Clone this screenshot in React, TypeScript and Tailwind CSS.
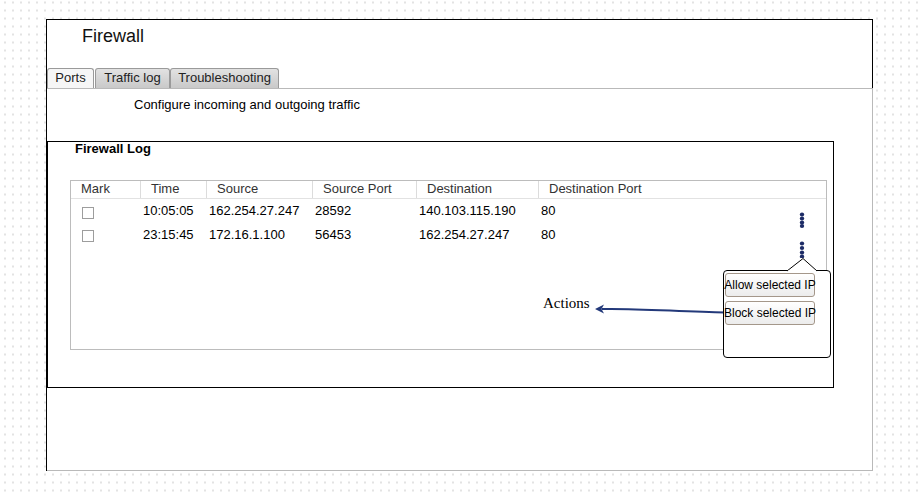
import React from "react";

const cols = [
  { label: "Mark", w: "w-[69px]" },
  { label: "Time", w: "w-[66px]" },
  { label: "Source", w: "w-[106px]" },
  { label: "Source Port", w: "w-[104px]" },
  { label: "Destination", w: "w-[122px]" },
];

const rows = [
  ["10:05:05", "162.254.27.247", "28592", "140.103.115.190", "80"],
  ["23:15:45", "172.16.1.100", "56453", "162.254.27.247", "80"],
];

function Kebab({ ys }: { ys: number[] }) {
  return (
    <svg width="8" height="18" viewBox="0 0 8 18" className="block">
      {ys.map((y, i) => (
        <ellipse key={i} cx="4" cy={y} rx="2.2" ry="1.9" fill="#1c2b66" />
      ))}
    </svg>
  );
}

export default function App() {
  return (
    <div
      className="w-[918px] h-[494px] bg-white bg-[radial-gradient(circle,#e3e3e3_0.8px,transparent_1.1px)] bg-[length:8px_8px] bg-[position:1px_-1.5px] pt-[19px] pl-[46px] overflow-hidden"
      style={{ fontFamily: '"Liberation Sans", Arial, sans-serif' }}
    >
      <div className="w-[827px] h-[452px] flex flex-col border-l border-t border-black bg-white">
        {/* Header */}
        <div className="h-[68px] border-r border-black flex flex-col">
          <div className="pl-[35px] pt-[5px] text-[18px] leading-[22px] text-[#111]">Firewall</div>
          <div className="mt-auto flex items-end h-[20px]">
            <div className="w-[47px] h-[20px] flex items-center justify-center pb-[2px] border border-b-0 border-[#9a9a9a] rounded-t-[3px] bg-[#f6f6f6] text-[13px] text-[#222]">
              Ports
            </div>
            <div className="ml-[1px] w-[75px] h-[20px] flex items-center justify-center pb-[2px] border border-b-0 border-[#9a9a9a] rounded-t-[3px] bg-gradient-to-b from-[#e2e2e2] to-[#c9c9c9] text-[13px] text-[#222]">
              Traffic log
            </div>
            <div className="w-[109px] h-[20px] flex items-center justify-center pb-[2px] border border-b-0 border-[#9a9a9a] rounded-t-[3px] bg-gradient-to-b from-[#e2e2e2] to-[#c9c9c9] text-[13px] text-[#222]">
              Troubleshooting
            </div>
          </div>
        </div>

        {/* Content */}
        <div className="flex-1 border-t border-r border-b border-[#b9b9b9] flex flex-col">
          <div className="pl-[87px] pt-[8px] text-[13px] leading-[16px] text-black">
            Configure incoming and outgoing traffic
          </div>

          <div className="mt-[28px] w-[787px] h-[247px] border border-black flex flex-col">
            <div className="pl-[27px] text-[13px] leading-[14px] font-bold text-black">Firewall Log</div>

            <div className="relative ml-[22px] mt-[24px] w-[757px] h-[170px] border border-[#bcbcbc]">
              {/* header */}
              <div className="flex h-[18px] border-b border-[#e2e2e2] text-[13px] leading-[16px] text-[#333]">
                {cols.map((c, i) => (
                  <div
                    key={c.label}
                    className={`${c.w} pl-[10px] ${i > 0 ? "border-l border-[#dcdcdc]" : ""}`}
                  >
                    {c.label}
                  </div>
                ))}
                <div className="flex-1 pl-[10px] border-l border-[#dcdcdc]">Destination Port</div>
              </div>

              {/* rows */}
              {rows.map((r, ri) => (
                <div key={ri} className="flex h-[24px] text-[13px] leading-[15px] text-black">
                  <div className="w-[69px] pl-[11px]">
                    <div
                      className={`w-[12px] h-[12px] border border-[#9d9d9d] bg-white ${ri === 0 ? "mt-[8px]" : "mt-[7px]"}`}
                    />
                  </div>
                  <div className="w-[66px] pl-[3px] pt-[4px]">{r[0]}</div>
                  <div className="w-[106px] pl-[3px] pt-[4px]">{r[1]}</div>
                  <div className="w-[104px] pl-[3px] pt-[4px]">{r[2]}</div>
                  <div className="w-[122px] pl-[3px] pt-[4px]">{r[3]}</div>
                  <div className="flex-1 pl-[3px] pt-[4px]">{r[4]}</div>
                </div>
              ))}

              {/* kebab icons */}
              <div className="absolute left-[727px] top-[30px]">
                <Kebab ys={[3.5, 7.5, 11.5, 15]} />
              </div>
              <div className="absolute left-[727px] top-[59px]">
                <Kebab ys={[3.5, 8, 12.5, 16.5]} />
              </div>

              {/* Actions label + arrow */}
              <div
                className="absolute left-[472px] top-[114px] text-[15px] leading-[17px] text-black"
                style={{ fontFamily: '"Liberation Serif", "Times New Roman", serif' }}
              >
                Actions
              </div>
              <svg
                className="absolute left-[523px] top-[121px]"
                width="132"
                height="14"
                viewBox="0 0 132 14"
              >
                <path d="M131 10.5 C 90 10, 40 6, 8 7" stroke="#23397a" strokeWidth="2" fill="none" />
                <path d="M1 7 L10 2.5 L7.5 7 L10 11.5 Z" fill="#23397a" />
              </svg>

              {/* popup */}
              <div className="absolute left-[652px] top-[89px] w-[108px] h-[88px] border border-black rounded-[4px] bg-white flex flex-col pl-[1px] pt-[2px] gap-[4px]">
                <svg
                  className="absolute left-[62px] top-[-14px]"
                  width="32"
                  height="16"
                  viewBox="0 0 32 16"
                >
                  <path d="M1 14 L17 1.5 L31 14" stroke="black" strokeWidth="1" fill="white" />
                  <rect x="2" y="13.5" width="28" height="3" fill="white" />
                </svg>
                <div className="w-[90px] h-[24px] flex items-center justify-center whitespace-nowrap border border-[#a4978a] rounded-[3px] bg-gradient-to-b from-[#ffffff] to-[#ececec] text-[12px] text-black">
                  Allow selected IP
                </div>
                <div className="w-[90px] h-[24px] flex items-center justify-center whitespace-nowrap border border-[#a4978a] rounded-[3px] bg-gradient-to-b from-[#ffffff] to-[#ececec] text-[12px] text-black">
                  Block selected IP
                </div>
              </div>
            </div>
          </div>
        </div>
      </div>
    </div>
  );
}
